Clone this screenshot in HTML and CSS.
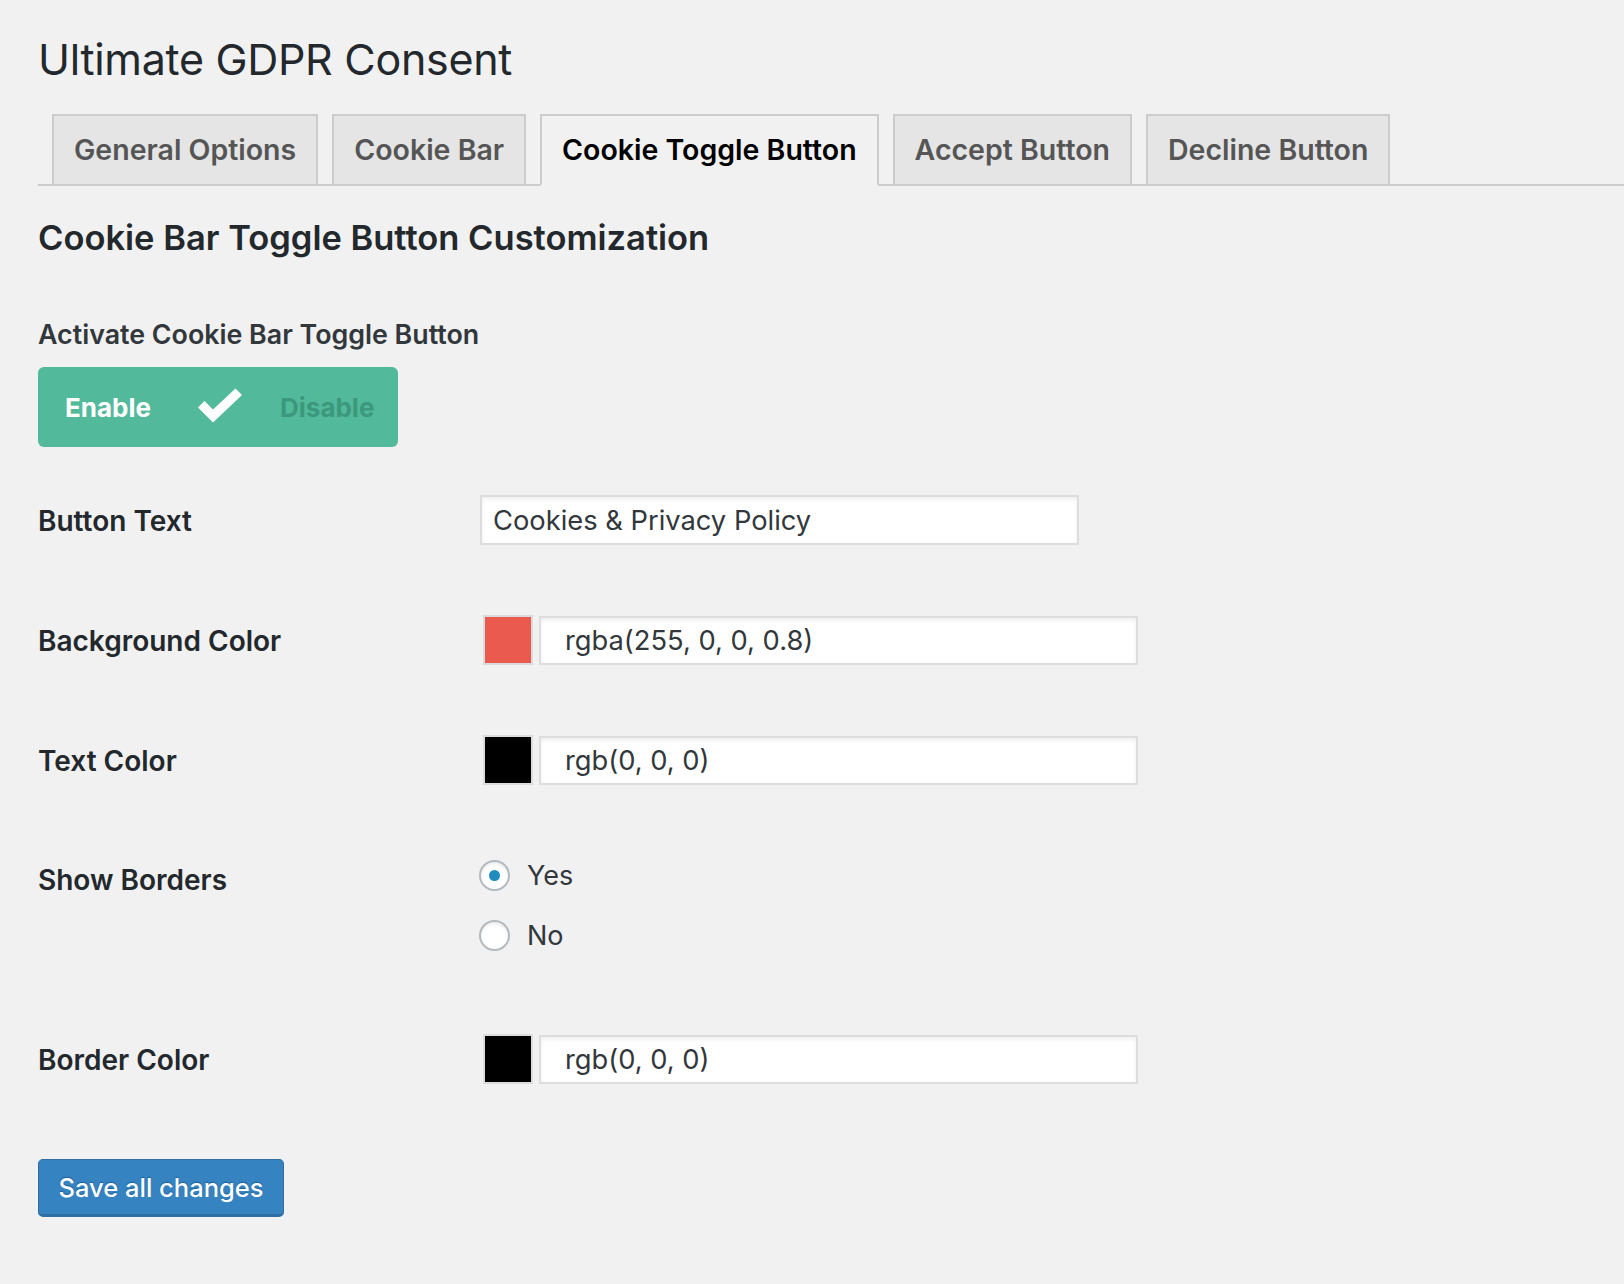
FILE: index.html
```html
<!DOCTYPE html>
<html lang="en">
<head>
<meta charset="utf-8">
<title>Ultimate GDPR Consent</title>
<link rel="stylesheet" href="styles.css">
</head>
<body>
<div class="wrap">
  <h1 class="page-title">Ultimate GDPR Consent</h1>
  <nav class="tabs">
    <a class="tab">General Options</a>
    <a class="tab">Cookie Bar</a>
    <a class="tab tab-active">Cookie Toggle Button</a>
    <a class="tab">Accept Button</a>
    <a class="tab">Decline Button</a>
  </nav>

  <h2 class="section-title">Cookie Bar Toggle Button Customization</h2>
  <div class="activate-label">Activate Cookie Bar Toggle Button</div>
  <div class="switch">
    <span class="switch-on">Enable</span>
    <svg class="switch-check" width="48" height="36" viewBox="0 0 48 36" aria-hidden="true">
      <path d="M2 19.5 L8.5 13 L17 21.5 L39.5 0.5 L46 7 L17 34.5 Z" fill="#fff"/>
    </svg>
    <span class="switch-off">Disable</span>
  </div>

  <div class="form">
    <div class="row row-text">
      <label class="row-label">Button Text</label>
      <div class="field">
        <input class="text-input text-input-plain" type="text" value="Cookies &amp; Privacy Policy">
      </div>
    </div>

    <div class="row row-color">
      <label class="row-label">Background Color</label>
      <div class="field color-field">
        <span class="swatch swatch-red"></span>
        <input class="text-input text-input-color" type="text" value="rgba(255, 0, 0, 0.8)">
      </div>
    </div>

    <div class="row row-color">
      <label class="row-label">Text Color</label>
      <div class="field color-field">
        <span class="swatch swatch-black"></span>
        <input class="text-input text-input-color" type="text" value="rgb(0, 0, 0)">
      </div>
    </div>

    <div class="row row-radio">
      <label class="row-label row-label-top">Show Borders</label>
      <div class="field radio-field">
        <div class="radio-line"><span class="radio radio-checked"></span><span class="radio-text">Yes</span></div>
        <div class="radio-line"><span class="radio"></span><span class="radio-text">No</span></div>
      </div>
    </div>

    <div class="row row-color row-after-radio">
      <label class="row-label">Border Color</label>
      <div class="field color-field">
        <span class="swatch swatch-black"></span>
        <input class="text-input text-input-color" type="text" value="rgb(0, 0, 0)">
      </div>
    </div>
  </div>

  <button class="save-btn" type="button">Save all changes</button>
</div>
</body>
</html>
```

FILE: styles.css
```css
* { box-sizing: border-box; }

html, body {
  margin: 0;
  padding: 0;
  background: #f1f1f1;
}

body {
  font-family: "Inter", "Noto Sans", "Liberation Sans", sans-serif;
  color: #23282d;
}

.wrap {
  padding: 33px 0 60px 38px;
}

.page-title {
  margin: 0;
  font-size: 43px;
  font-weight: 400;
  line-height: 52px;
  color: #23282d;
  letter-spacing: -0.3px;
}

.tabs {
  margin-top: 29px;
  display: flex;
  gap: 14px;
  padding-left: 14px;
  border-bottom: 2px solid #cccccc;
  height: 72px;
}

.tab {
  display: block;
  height: 72px;
  padding: 0 20px;
  border: 2px solid #cccccc;
  background: #e5e5e5;
  color: #555555;
  font-size: 28.5px;
  font-weight: 600;
  line-height: 68px;
  white-space: nowrap;
}

.tab-active {
  background: #f1f1f1;
  border-bottom-color: #f1f1f1;
  color: #000000;
}

.section-title {
  margin: 31px 0 0;
  font-size: 34.5px;
  font-weight: 600;
  line-height: 42px;
  color: #23282d;
}

.activate-label {
  margin-top: 58px;
  font-size: 26.8px;
  font-weight: 600;
  line-height: 34px;
  color: #32373c;
}

.switch {
  margin-top: 16px;
  width: 360px;
  height: 80px;
  border-radius: 6px;
  background: #53b99b;
  display: flex;
  align-items: center;
  padding-left: 27px;
}

.switch-on {
  font-size: 26px;
  font-weight: 700;
  color: #ffffff;
  width: 131px;
}

.switch-check {
  display: block;
  margin-top: -2px;
}

.switch-off {
  margin-left: 36px;
  font-size: 26px;
  font-weight: 700;
  color: #3b987c;
}

.form {
  margin-top: 48px;
}

.row {
  display: grid;
  grid-template-columns: 442px 1fr;
  align-items: center;
}

.row-color {
  margin-top: 68px;
}

.row + .row-color {
  margin-top: 70px;
}

.row-radio {
  margin-top: 60px;
  align-items: start;
}

.row-after-radio {
  margin-top: 69px !important;
}

.row-label {
  font-size: 28px;
  font-weight: 600;
  color: #23282d;
  line-height: 34px;
  padding-top: 2px;
}

.row-label-top {
  padding-top: 18px;
}

.field {
  display: flex;
  align-items: center;
}

.text-input {
  font-family: inherit;
  font-size: 27.3px;
  color: #32373c;
  background: #ffffff;
  border: 2px solid #dddddd;
  box-shadow: inset 0 2px 4px rgba(0, 0, 0, 0.07);
  border-radius: 0;
  outline: none;
  margin: 0;
}

.text-input-plain {
  width: 599px;
  height: 50px;
  padding: 0 11px;
}

.color-field {
  padding-left: 3px;
}

.swatch {
  display: block;
  width: 50px;
  height: 50px;
  border: 2px solid #dcdcdc;
  flex: none;
}

.swatch-red { background: #ea5a4e; }
.swatch-black { background: #000000; }

.text-input-color {
  margin-left: 6px;
  width: 599px;
  height: 49px;
  padding: 0 24px;
}

.radio-field {
  flex-direction: column;
  align-items: flex-start;
}

.radio-line {
  height: 60px;
  display: flex;
  align-items: center;
}

.radio {
  display: block;
  width: 31px;
  height: 31px;
  border-radius: 50%;
  border: 2px solid #b4b9be;
  background: #ffffff;
  box-shadow: inset 0 2px 3px rgba(0, 0, 0, 0.08);
  position: relative;
  margin-left: -1px;
}

.radio-checked::after {
  content: "";
  position: absolute;
  left: 50%;
  top: 50%;
  width: 11px;
  height: 11px;
  margin: -5.5px 0 0 -5.5px;
  border-radius: 50%;
  background: #1e8cbe;
}

.radio-text {
  margin-left: 17px;
  font-size: 27px;
  color: #32373c;
}

.save-btn {
  margin-top: 75px;
  display: block;
  width: 246px;
  height: 58px;
  padding: 0;
  background: #3683c2;
  border: 1px solid #2d6fa3;
  border-bottom-width: 3px;
  border-radius: 5px;
  color: #ffffff;
  font-family: inherit;
  font-size: 25.5px;
  font-weight: 500;
  text-shadow: 0 -1px 1px rgba(0, 60, 110, 0.5);
}
```
